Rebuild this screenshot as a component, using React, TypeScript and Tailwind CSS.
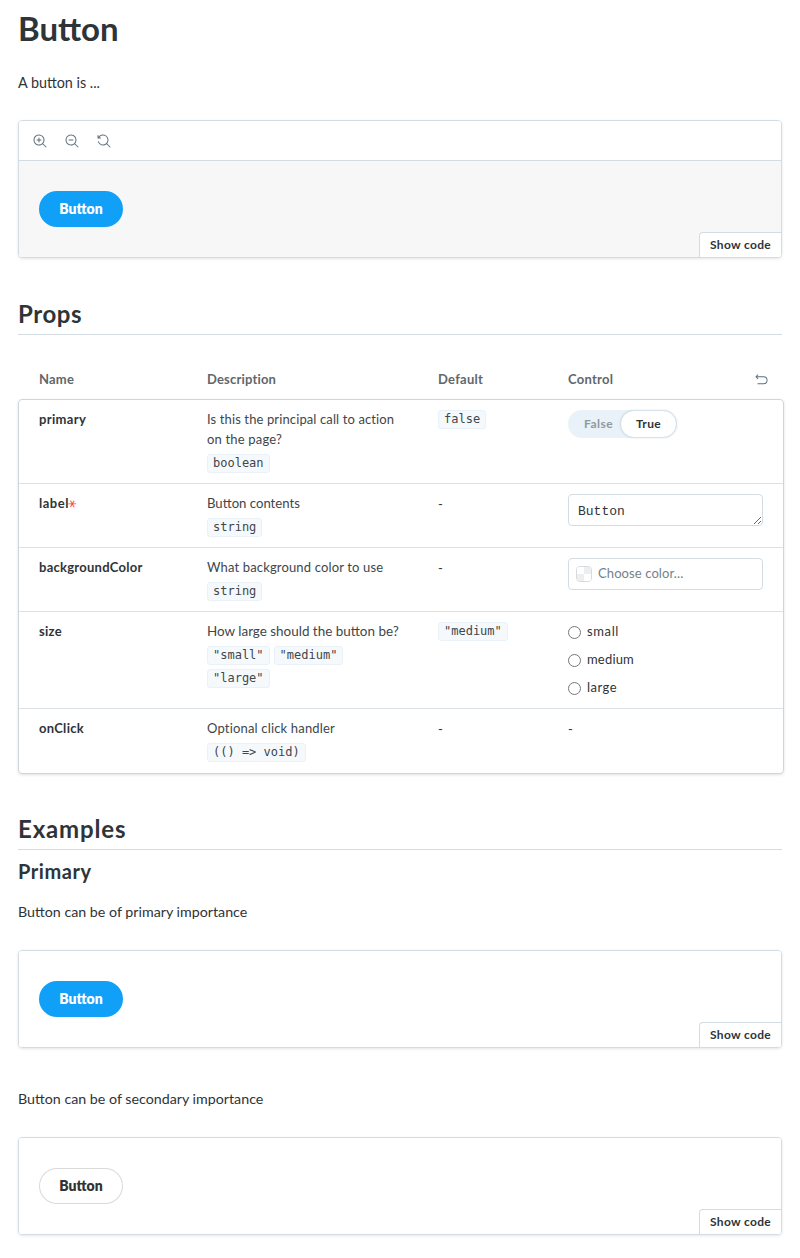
import type { ReactNode } from "react";

const ZOOM_IN = [
  "M6 3.5a.5.5 0 01.5.5v1.5H8a.5.5 0 010 1H6.5V8a.5.5 0 01-1 0V6.5H4a.5.5 0 010-1h1.5V4a.5.5 0 01.5-.5z",
  "M9.544 10.206a5.5 5.5 0 11.662-.662.5.5 0 01.148.102l3 3a.5.5 0 01-.708.708l-3-3a.5.5 0 01-.102-.148zM10.5 6a4.5 4.5 0 11-9 0 4.5 4.5 0 019 0z",
];
const ZOOM_OUT = [
  "M4 5.5a.5.5 0 000 1h4a.5.5 0 000-1H4z",
  "M6 11.5c1.35 0 2.587-.487 3.544-1.294a.5.5 0 00.102.148l3 3a.5.5 0 00.708-.708l-3-3a.5.5 0 00-.148-.102A5.5 5.5 0 106 11.5zm0-1a4.5 4.5 0 100-9 4.5 4.5 0 000 9z",
];
const ZOOM_RESET = [
  "M1.5 2.837V1.5a.5.5 0 00-1 0V4a.5.5 0 00.5.5h2.5a.5.5 0 000-1H2.258a4.5 4.5 0 11-.496 4.016.5.5 0 10-.942.337 5.502 5.502 0 008.724 2.353.5.5 0 00.102.148l3 3a.5.5 0 00.708-.708l-3-3a.5.5 0 00-.148-.102A5.5 5.5 0 101.5 2.837z",
];
const UNDO = [
  "M3.354.646a.5.5 0 010 .708L2.207 2.5H9.25a4.25 4.25 0 010 8.5H3a.5.5 0 010-1h6.25a3.25 3.25 0 100-6.5H2.207l1.147 1.146a.5.5 0 11-.708.708l-2-2a.5.5 0 010-.708l2-2a.5.5 0 01.708 0z",
];

function Icon({ paths, className = "size-3.5" }: { paths: string[]; className?: string }) {
  return (
    <svg viewBox="0 0 14 14" className={`fill-[#5c6f7c] ${className}`} aria-hidden="true">
      {paths.map((d) => (
        <path key={d} fillRule="evenodd" clipRule="evenodd" d={d} />
      ))}
    </svg>
  );
}

function PillButton({ primary = false }: { primary?: boolean }) {
  const look = primary ? "bg-[#11a0f8] text-white" : "text-[#333] shadow-[inset_0_0_0_1px_rgba(0,0,0,0.15)]";
  return (
    <button className={`flex h-9 w-[84px] items-center justify-center rounded-full text-[14px] font-extrabold ${look}`}>
      Button
    </button>
  );
}

function Preview({ toolbar = false, primary = false }: { toolbar?: boolean; primary?: boolean }) {
  return (
    <div className="relative mt-[26px] overflow-hidden rounded border border-[#d2dce2] shadow-[0_1px_3px_0_rgba(0,0,0,0.1)]">
      {toolbar && (
        <div className="flex h-10 items-center gap-[18px] border-b border-[#d2dce2] bg-white pl-3.5">
          <Icon paths={ZOOM_IN} />
          <Icon paths={ZOOM_OUT} />
          <Icon paths={ZOOM_RESET} />
        </div>
      )}
      <div className={`px-5 py-[30px] ${toolbar ? "bg-[#f7f7f7]" : "bg-white"}`}>
        <PillButton primary={primary} />
      </div>
      <button className="absolute right-0 bottom-0 flex h-[25px] w-[82px] items-center justify-center rounded-tl border-t border-l border-[#d2dce2] bg-white text-xs font-bold tracking-[0.31px]">
        Show code
      </button>
    </div>
  );
}

function SectionTitle({ children, className }: { children: ReactNode; className: string }) {
  return (
    <h2 className={`h-[37px] border-b border-[#d2dce2] pt-px pb-[5px] text-2xl leading-[30px] font-bold ${className}`}>
      {children}
    </h2>
  );
}

function Code({ children }: { children: ReactNode }) {
  return (
    <code className="flex h-[19px] items-center rounded-[3px] border border-[#e8f2f8] bg-[#f6f9fb] px-[5px] pb-0.5 font-['DejaVu_Sans_Mono',monospace] text-xs whitespace-nowrap text-[#40464b]">
      {children}
    </code>
  );
}

const COLUMNS = "grid grid-cols-[168px_231px_130px_195px] pl-5";

type RowProps = { name: ReactNode; text: ReactNode; types: string[]; value?: string; control: ReactNode; height: string };

function Row({ name, text, types, value, control, height }: RowProps) {
  return (
    <div className={`${COLUMNS} border-b border-[#dbe1e4] pt-2.5 leading-5 last:border-b-0 ${height}`}>
      <div className="-mt-px font-bold">{name}</div>
      <div>
        <div className="-mt-px mb-[5px] text-[#40464b]">{text}</div>
        <div className="flex w-[200px] flex-wrap gap-1">
          {types.map((t) => (
            <Code key={t}>{t}</Code>
          ))}
        </div>
      </div>
      <div className="flex items-start">{value ? <Code>{value}</Code> : "-"}</div>
      <div>{control}</div>
    </div>
  );
}

function BooleanControl() {
  return (
    <div className="flex h-7 w-[109px] rounded-full bg-[#e8f2f8] text-xs font-bold">
      <span className="flex w-[52px] items-center pl-4 tracking-[0.45px] text-[#8f999f]">False</span>
      <span className="flex w-[57px] items-center justify-center rounded-full border border-[#d5e2ea] bg-white tracking-[0.33px] shadow-[0_0_2px_rgba(38,85,115,0.15)]">
        True
      </span>
    </div>
  );
}

function ColorControl() {
  return (
    <div className="flex h-8 items-center rounded border border-[#d2dce2] pl-[7px] text-[#73828c]">
      <span className="mr-1.5 grid size-4 grid-cols-2 overflow-hidden rounded border border-[#d5dbde]">
        <i className="bg-white" />
        <i className="bg-[#eee]" />
        <i className="bg-[#eee]" />
        <i className="bg-white" />
      </span>
      <span className="pb-0.5 tracking-[0.1px]">Choose color...</span>
    </div>
  );
}

function RadioControl() {
  return (
    <div className="flex flex-col gap-2">
      <label className="flex h-5 items-center gap-1.5">
        <input type="radio" name="size" className="mt-px size-[13px]" />
        <span className="-mt-0.5 tracking-[0.62px]">small</span>
      </label>
      <label className="flex h-5 items-center gap-1.5">
        <input type="radio" name="size" className="mt-px size-[13px]" />
        <span className="-mt-0.5 tracking-[0.18px]">medium</span>
      </label>
      <label className="flex h-5 items-center gap-1.5">
        <input type="radio" name="size" className="mt-px size-[13px]" />
        <span className="-mt-0.5 tracking-[0.47px]">large</span>
      </label>
    </div>
  );
}

export default function App() {
  return (
    <main className="h-[1258px] overflow-hidden bg-white px-[18px] pt-1 font-['Lato',sans-serif] text-sm text-[#2e3438]">
      <h1 className="pt-px text-[33px] leading-[46px] font-bold">Button</h1>
      <p className="mt-5 text-[14.35px] leading-6">A button is ...</p>
      <div className="-mt-px">
        <Preview toolbar primary />
      </div>

      <SectionTitle className="mt-10 tracking-[0.6px]">Props</SectionTitle>
      <div className="mt-6 w-[766px] text-[13px]">
        <div className={`${COLUMNS} h-10 items-center pt-px pl-[21px] font-bold text-[#62676a]`}>
          <span className="tracking-[0.2px]">Name</span>
          <span className="tracking-[0.18px]">Description</span>
          <span className="tracking-[0.26px]">Default</span>
          <span className="flex items-center justify-between tracking-[0.25px]">
            Control
            <Icon paths={UNDO} className="-mr-[4.5px] mt-px size-[13px]" />
          </span>
        </div>
        <div className="rounded border border-[#cfd6da] shadow-[0_1px_3px_0_rgba(0,0,0,0.12)]">
          <Row
            height="h-[84px]"
            name={<span className="tracking-[0.34px]">primary</span>}
            text={
              <>
                <span className="block tracking-[0.12px]">Is this the principal call to action</span>
                <span className="block tracking-[0.18px]">on the page?</span>
              </>
            }
            types={["boolean"]}
            value="false"
            control={<BooleanControl />}
          />
          <Row
            height="h-16"
            name={
              <span className="flex items-start">
                <span className="tracking-[0.52px]">label</span>
                <span className="-ml-px mt-1.5 h-4 origin-[4px_5.5px] rotate-30 font-['DejaVu_Sans',sans-serif] text-base leading-4 font-normal text-[#ff4433]">
                  *
                </span>
              </span>
            }
            text={<span className="text-[13.15px]">Button contents</span>}
            types={["string"]}
            control={
              <textarea
                defaultValue="Button"
                className="block h-8 w-full resize rounded border border-[#d2dce2] px-[9px] pt-[7px] pb-[3px] font-['Liberation_Mono',monospace] text-[13px] leading-5 text-[#2e3438]"
              />
            }
          />
          <Row
            height="h-16"
            name={<span className="tracking-[0.26px]">backgroundColor</span>}
            text={<span className="tracking-[0.15px]">What background color to use</span>}
            types={["string"]}
            control={<ColorControl />}
          />
          <Row
            height="h-[97px]"
            name={<span className="tracking-[0.3px]">size</span>}
            text={<span className="text-[13.45px]">How large should the button be?</span>}
            types={['"small"', '"medium"', '"large"']}
            value={'"medium"'}
            control={<RadioControl />}
          />
          <Row
            height="h-16"
            name={<span className="tracking-[0.28px]">onClick</span>}
            text={<span className="tracking-[0.17px]">Optional click handler</span>}
            types={["(() => void)"]}
            control="-"
          />
        </div>
      </div>

      <SectionTitle className="mt-[39px] tracking-[0.85px]">Examples</SectionTitle>
      <h3 className="mt-1.5 text-xl leading-[30px] font-bold tracking-[0.55px]">Primary</h3>
      <p className="mt-3.5 text-[14.25px] leading-6">Button can be of primary importance</p>
      <Preview primary />
      <p className="mt-[39px] text-[14.25px] leading-6">Button can be of secondary importance</p>
      <Preview />
    </main>
  );
}
